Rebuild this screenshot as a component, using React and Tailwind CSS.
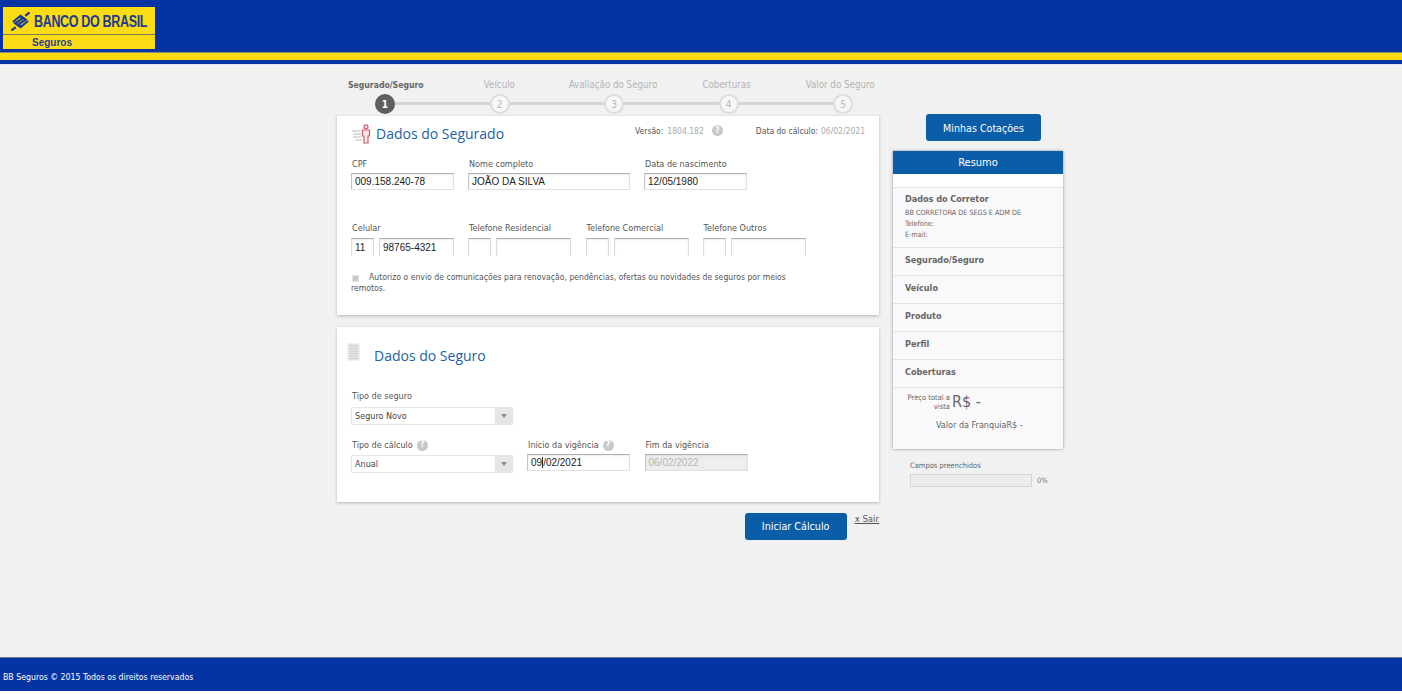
import React from "react";

const labelFont = "font-['DejaVu_Sans_Condensed','DejaVu_Sans',sans-serif]";
const titleFont = "font-['Open_Sans','Noto_Sans',sans-serif]";
const inputFont = "font-['Liberation_Sans',sans-serif]";
const steps = ["Segurado/Seguro", "Veículo", "Avaliação do Seguro", "Coberturas", "Valor do Seguro"];

function BankLogo() {
  return (
    <svg viewBox="0 0 20 20" className="h-[19px] w-[19px] shrink-0" fill="none" stroke="#1b3a94" strokeWidth="2.3">
      <path d="M2 10.5 L10 4 L15.5 8 L8 13 L11 15.5" />
      <path d="M18 9.5 L10 16 L4.5 12 L12 7 L9 4.5" />
      <path d="M0.5 19.5 L5 16 M15 4 L19.5 0.5" />
    </svg>
  );
}

function PersonIcon() {
  return (
    <svg viewBox="0 0 20 20" className="h-[20px] w-[20px]">
      <path d="M0 7 H9 M1 10 H9 M1 13 H9 M3 16 H10" stroke="#dcdcdc" strokeWidth="2" />
      <circle cx="14" cy="2.8" r="2" fill="#fbeaec" stroke="#cf5a68" strokeWidth="1.2" />
      <path d="M10.5 6 H17.5 V12 H16 V19 H12 V12 H10.5 Z" fill="#fbeaec" stroke="#cf5a68" strokeWidth="1.2" />
    </svg>
  );
}

function DocIcon() {
  return (
    <svg viewBox="0 0 14 18" className="h-[18px] w-[14px]">
      <rect x="0.5" y="0.5" width="12" height="17" fill="#e6e6e6" />
      <path d="M2 3 H11 M2 5.5 H11 M2 8 H11 M2 10.5 H11 M2 13 H11 M2 15.5 H11" stroke="#cccccc" strokeWidth="1" />
    </svg>
  );
}

function Help({ className = "" }) {
  return (
    <span className={`inline-flex h-[11px] w-[11px] items-center justify-center rounded-full bg-[#c9c9c9] text-[8px] font-bold leading-none text-white ${className}`}>
      ?
    </span>
  );
}

function Label({ children, help }) {
  return (
    <div className={`flex h-[14px] items-center gap-[4px] whitespace-nowrap pl-px text-[9px] leading-none text-[#555] ${labelFont}`}>
      {children}
      {help && <Help />}
    </div>
  );
}

function Field({ value, width, disabled, caret }) {
  return (
    <div
      className={`flex h-[17px] items-center border border-[#e0e0e0] border-t-[#b0b0b0] border-l-[#c4c4c4] px-[3px] text-[10px] shadow-[inset_0_1px_2px_rgba(0,0,0,0.08)] ${inputFont} ${
        disabled ? "bg-[#eeeeee] text-[#b5b5b5]" : "bg-white text-[#222]"
      } ${width}`}
    >
      {caret ? (
        <>
          <span>09</span>
          <span className="h-[11px] w-px bg-[#222]" />
          <span>/02/2021</span>
        </>
      ) : (
        value
      )}
    </div>
  );
}

function OpenField({ value, width }) {
  return (
    <div className={`flex h-[18px] items-center border border-b-0 border-[#dcdcdc] border-t-[#b0b0b0] bg-white px-[3px] text-[10px] text-[#222] shadow-[inset_0_1px_2px_rgba(0,0,0,0.08)] ${inputFont} ${width}`}>
      {value}
    </div>
  );
}

function Phone({ label, area, number, className = "" }) {
  return (
    <div className={className}>
      <Label>{label}</Label>
      <div className="mt-[3px] flex gap-[5px]">
        <OpenField value={area} width="w-[23px]" />
        <OpenField value={number} width="w-[75px]" />
      </div>
    </div>
  );
}

function SelectBox({ value }) {
  return (
    <div className={`flex h-[18px] w-[162px] items-center border border-[#e6e6e6] bg-white pt-[2px] text-[9px] text-[#444] ${labelFont}`}>
      <span className="flex-1 pl-[3px]">{value}</span>
      <span className="-mt-[2px] flex h-[16px] w-[17px] items-center justify-center bg-[#e6e6e6]">
        <span className="h-0 w-0 border-x-[3px] border-t-[4px] border-x-transparent border-t-[#8d8d8d]" />
      </span>
    </div>
  );
}

function ResumoRow({ children }) {
  return (
    <div className={`flex h-[28px] items-center border-b border-[#e2e2e2] pb-[1px] pl-[12px] text-[9px] font-bold text-[#666] ${labelFont}`}>
      {children}
    </div>
  );
}

export default function App() {
  return (
    <div className={`flex h-[694px] flex-col overflow-hidden bg-[#f1f1f1] ${labelFont}`}>
      <header className="shrink-0">
        <div className="h-[53px] border-b border-[#8a8f70] bg-[#0433a3] pl-[3px] pt-[7px]">
          <div className="h-[42px] w-[152px] bg-[#fbdc14]">
            <div className="flex h-[28px] items-center gap-[4px] border-b border-[#7d7a5c] pl-[8px] pt-[2px]">
              <BankLogo />
              <span className={`origin-left scale-x-[0.78] whitespace-nowrap text-[16px] font-bold leading-none tracking-[-0.4px] text-[#1b3a94] ${inputFont}`}>
                BANCO DO BRASIL
              </span>
            </div>
            <div className={`pl-[29px] pt-[1px] text-[10px] font-bold leading-[13px] text-[#2b3f97] ${inputFont}`}>
              Seguros
            </div>
          </div>
        </div>
        <div className="h-[7px] bg-[#fbdc14]" />
        <div className="h-[4px] bg-[#0433a3]" />
        <div className="h-px bg-[#dbe6f5]" />
      </header>

      <main className="flex flex-1 justify-start pl-[327px]">
        <div className="w-[570px]">
          <div className="grid h-[29px] grid-cols-5 pt-[14px] pl-[2px]">
            {steps.map((s, i) => (
              <span key={s} className={`text-center leading-[12px] whitespace-nowrap ${i === 0 ? "text-[8.6px] font-bold text-[#666]" : "text-[9.7px] text-[#b4b4b4]"}`}>
                {s}
              </span>
            ))}
          </div>
          <div className="ml-[48px] flex h-[22px] w-[478px] items-start">
            {[1, 2, 3, 4, 5].map((n) => (
              <React.Fragment key={n}>
                <span
                  className={`flex h-[20px] w-[20px] shrink-0 items-center justify-center rounded-full text-[10px] ${
                    n === 1 ? "bg-[#5f5f5f] font-bold text-white" : "border-2 border-[#dcdcdc] bg-[#f7f7f7] text-[#b8b8b8]"
                  }`}
                >
                  {n}
                </span>
                {n < 5 && <span className="mt-[8px] h-[3px] flex-1 bg-[#d4d4d4]" />}
              </React.Fragment>
            ))}
          </div>

          <div className="ml-[10px] w-[542px]">
            <section className="h-[199px] bg-white px-[14px] shadow-[0_1px_3px_rgba(0,0,0,0.25)]">
              <div className="flex h-[41px] items-start pt-[8px]">
                <span className="ml-px"><PersonIcon /></span>
                <h2 className={`ml-[4px] text-[14px] leading-[20px] text-[#1b62a5] ${titleFont}`}>Dados do Segurado</h2>
                <div className="ml-auto flex text-[8.5px] leading-[14px] text-[#555]">
                  <span className="mr-[4px]">Versão:</span>
                  <span className="text-[#a8a8a8]">1804.182</span>
                  <Help className="ml-[8px] mt-[1px]" />
                  <span className="ml-[33px] mr-[3px]">Data do cálculo:</span>
                  <span className="text-[#a8a8a8]">06/02/2021</span>
                </div>
              </div>

              <div className="flex">
                <div className="w-[117px]">
                  <Label>CPF</Label>
                  <div className="mt-[2px]"><Field value="009.158.240-78" width="w-[103px]" /></div>
                </div>
                <div className="w-[176px]">
                  <Label>Nome completo</Label>
                  <div className="mt-[2px]"><Field value="JOÃO DA SILVA" width="w-[162px]" /></div>
                </div>
                <div>
                  <Label>Data de nascimento</Label>
                  <div className="mt-[2px]"><Field value="12/05/1980" width="w-[103px]" /></div>
                </div>
              </div>

              <div className="mt-[31px] flex">
                <Phone label="Celular" area="11" number="98765-4321" className="w-[117px]" />
                <Phone label="Telefone Residencial" className="w-[117.5px]" />
                <Phone label="Telefone Comercial" className="w-[117px]" />
                <Phone label="Telefone Outros" />
              </div>

              <p className="mt-[16px] w-[440px] text-[8.6px] leading-[11px] text-[#555]">
                <span className="ml-px mr-[10px] inline-block h-[7px] w-[7px] translate-y-[2px] border border-[#e5e5e5] bg-[#c9c9c9]" />
                Autorizo o envio de comunicações para renovação, pendências, ofertas ou novidades de seguros por meios remotos.
              </p>
            </section>

            <section className="mt-[12px] h-[175px] bg-white px-[14px] shadow-[0_1px_3px_rgba(0,0,0,0.25)]">
              <div className="flex h-[62px] items-start pt-[16px]">
                <span className="-ml-[4px]"><DocIcon /></span>
                <h2 className={`ml-[13px] mt-[3px] text-[14px] leading-[20px] text-[#1b62a5] ${titleFont}`}>Dados do Seguro</h2>
              </div>
              <Label>Tipo de seguro</Label>
              <div className="mt-[4px]"><SelectBox value="Seguro Novo" /></div>
              <div className="mt-[13px] flex">
                <div className="w-[176px]">
                  <Label help>Tipo de cálculo</Label>
                  <div className="mt-[3px]"><SelectBox value="Anual" /></div>
                </div>
                <div className="w-[117.5px]">
                  <Label help>Início da vigência</Label>
                  <div className="mt-[2px]"><Field caret width="w-[103px]" /></div>
                </div>
                <div>
                  <Label>Fim da vigência</Label>
                  <div className="mt-[2px]"><Field value="06/02/2022" disabled width="w-[103px]" /></div>
                </div>
              </div>
            </section>

            <div className="mt-[11px] flex items-start justify-end">
              <button className={`mr-[8px] h-[27px] w-[102px] rounded-[3px] bg-[#0a5ea8] pt-[2px] text-[10.7px] text-white ${labelFont}`}>Iniciar Cálculo</button>
              <a className="text-[9.5px] leading-[12px] text-[#555] underline">x Sair</a>
            </div>
          </div>
        </div>

        <aside className="ml-[-4px] w-[170px] pt-[49px]">
          <button className={`ml-[33px] block h-[27px] w-[115px] rounded-[3px] bg-[#0a5ea8] pt-[2px] text-[10.6px] text-white ${labelFont}`}>Minhas Cotações</button>
          <div className="mt-[10px] h-[298px] bg-[#f9f9fb] shadow-[0_0_3px_rgba(0,0,0,0.4)]">
            <div className="flex h-[23px] items-center justify-center bg-[#0a5ea8] pt-[1px] text-[11px] text-white">Resumo</div>
            <div className="h-[14px] border-b border-[#e2e2e2] bg-white" />
            <div className="h-[60px] border-b border-[#e2e2e2] pl-[12px] pt-[5px] text-[#666]">
              <div className="text-[9px] font-bold leading-[13px]">Dados do Corretor</div>
              <div className="mt-[1px] text-[7.2px] leading-[11px]">BB CORRETORA DE SEGS E ADM DE</div>
              <div className="text-[7.2px] leading-[11px]">Telefone:</div>
              <div className="text-[7.2px] leading-[11px]">E-mail:</div>
            </div>
            <ResumoRow>Segurado/Seguro</ResumoRow>
            <ResumoRow>Veículo</ResumoRow>
            <ResumoRow>Produto</ResumoRow>
            <ResumoRow>Perfil</ResumoRow>
            <ResumoRow>Coberturas</ResumoRow>
            <div className="flex items-center pl-[11px] pt-[4px] text-[#666]">
              <div className="w-[46px] text-right text-[7.5px] leading-[9px]">Preço total a vista</div>
              <div className="ml-[2px] text-[16px] leading-[20px]">R$ -</div>
            </div>
            <div className="mt-[6px] pl-[43px] text-[9px] leading-[14px] text-[#666]">Valor da FranquiaR$ -</div>
          </div>
          <div className="ml-[17px] mt-[12px] text-[7.5px] leading-[10px] text-[#666]">Campos preenchidos</div>
          <div className="ml-[17px] mt-[3px] flex items-center">
            <div className="h-[13px] w-[122px] border border-[#d5d5d5] bg-[#ececec]" />
            <span className="ml-[5px] text-[7.5px] text-[#777]">0%</span>
          </div>
        </aside>
      </main>

      <footer className="flex h-[34px] shrink-0 items-center border-t border-[#6f7680] bg-[#0433a3] pl-[3px] pt-[7px] text-[8.7px] text-white">
        BB Seguros © 2015 Todos os direitos reservados
      </footer>
      <div className="h-[3px] shrink-0 bg-white" />
    </div>
  );
}
